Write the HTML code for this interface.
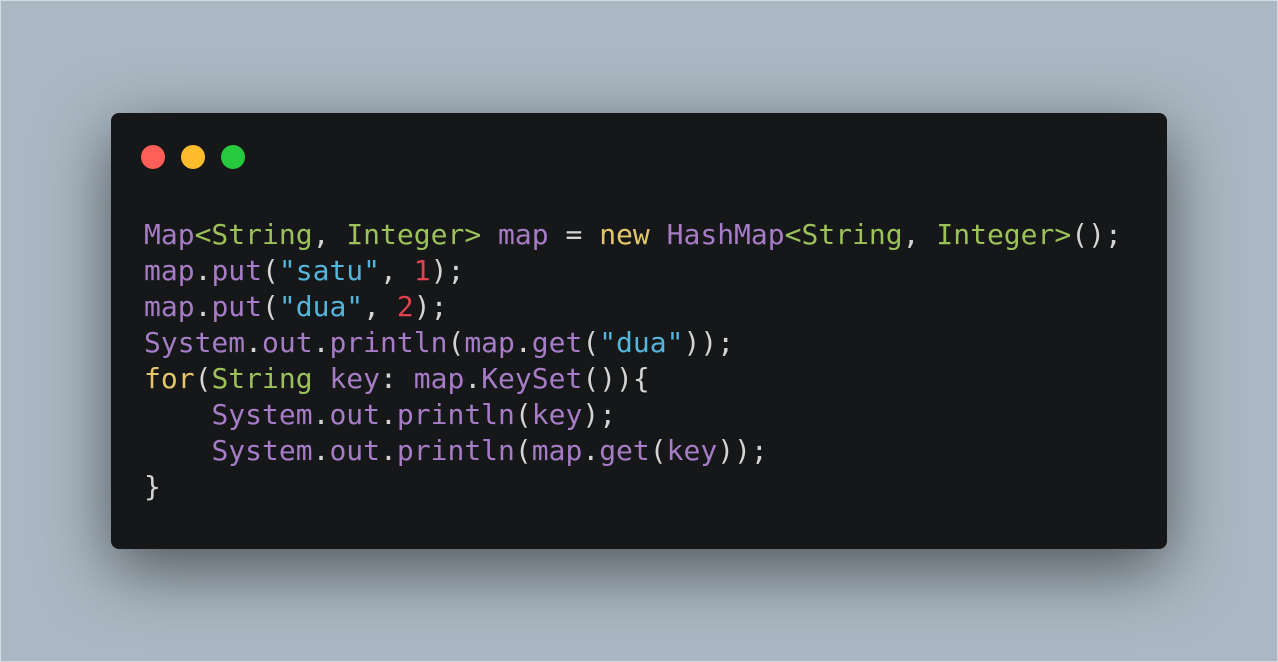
<!DOCTYPE html>
<html><head><style>
html,body{margin:0;padding:0;}
body{width:1278px;height:662px;background:#abb8c3;position:relative;overflow:hidden;box-sizing:border-box;border:1px solid #d4dbe1;}
.win{position:absolute;left:110px;top:112px;width:1056px;height:436px;background:#151718;border-radius:8px;box-shadow:0 20px 68px rgba(0,0,0,0.55);}
.dot{position:absolute;top:32px;width:24px;height:24px;border-radius:50%;}
pre{position:absolute;left:33px;top:104px;margin:0;font-family:"DejaVu Sans Mono","Liberation Mono",monospace;font-size:28px;line-height:36px;color:#d4d4d4;}
.p{color:#a67cc6}.g{color:#9cc05a}.y{color:#e5c76b}.s{color:#55b5db}.n{color:#e0424f}
</style></head><body>
<div class="win">
<div class="dot" style="left:30px;background:#ff5f56"></div>
<div class="dot" style="left:70px;background:#ffbd2e"></div>
<div class="dot" style="left:110px;background:#27c93f"></div>
<pre><span class="p">Map</span><span class="g">&lt;String</span>, <span class="g">Integer&gt;</span> <span class="p">map</span> = <span class="y">new</span> <span class="p">HashMap</span><span class="g">&lt;String</span>, <span class="g">Integer&gt;</span>();
<span class="p">map</span>.<span class="p">put</span>(<span class="s">"satu"</span>, <span class="n">1</span>);
<span class="p">map</span>.<span class="p">put</span>(<span class="s">"dua"</span>, <span class="n">2</span>);
<span class="p">System</span>.<span class="p">out</span>.<span class="p">println</span>(<span class="p">map</span>.<span class="p">get</span>(<span class="s">"dua"</span>));
<span class="y">for</span>(<span class="g">String</span> <span class="p">key</span>: <span class="p">map</span>.<span class="p">KeySet</span>()){
    <span class="p">System</span>.<span class="p">out</span>.<span class="p">println</span>(<span class="p">key</span>);
    <span class="p">System</span>.<span class="p">out</span>.<span class="p">println</span>(<span class="p">map</span>.<span class="p">get</span>(<span class="p">key</span>));
}</pre>
</div>
</body></html>
